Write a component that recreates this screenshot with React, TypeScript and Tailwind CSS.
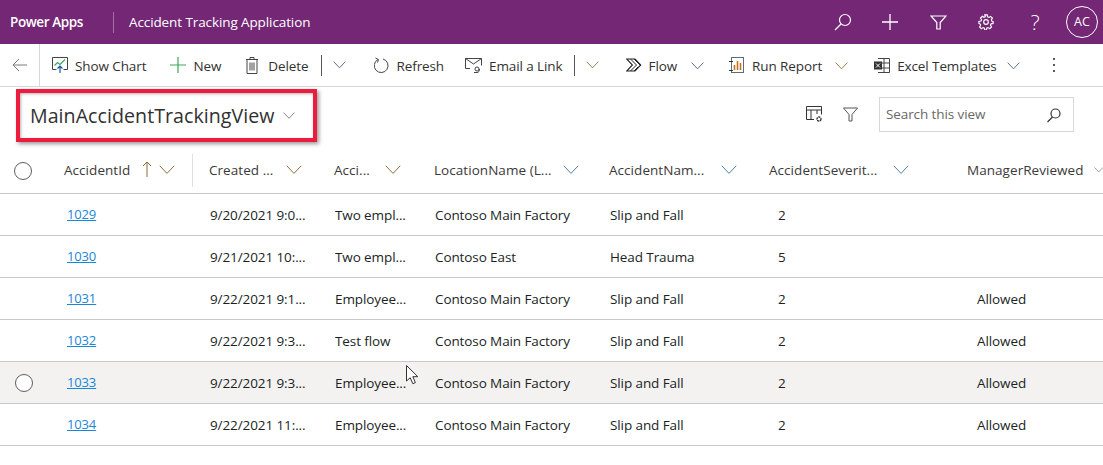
import React from "react";

const Chev = ({ c = "#605e5c", w = 12, className = "" }: { c?: string; w?: number; className?: string }) => (
  <svg width={w} height={w * 0.6} viewBox="0 0 20 12" fill="none" stroke={c} strokeWidth={20 / w} className={className}>
    <path d="M1 1l9 9.5L19 1" />
  </svg>
);

const Cmd = ({ icon, label, chev, chevColor, chevMl = "ml-[6px]", gap = "gap-[7px]", className = "" }: { icon: React.ReactNode; label: string; chev?: boolean; chevColor?: string; chevMl?: string; gap?: string; className?: string }) => (
  <div className={`flex items-center ${gap} ${className}`}>
    {icon}
    <span className="text-[#323130] whitespace-nowrap pt-[2px]">{label}</span>
    {chev && <Chev c={chevColor ?? "#5f6c8a"} w={13} className={`${chevMl} mt-[1px]`} />}
  </div>
);

const cols = "grid grid-cols-[64px_129px_125px_100px_175px_160px_198px_152px]";

const headers: { t: string; c: string; ml: string }[] = [
  { t: "Created ...", c: "#8a6d3b", ml: "ml-[13px]" },
  { t: "Acci...", c: "#8a6d3b", ml: "ml-[15px]" },
  { t: "LocationName (L...", c: "#4a7fa8", ml: "ml-[11px]" },
  { t: "AccidentNam...", c: "#4a7fa8", ml: "ml-[17px]" },
  { t: "AccidentSeverit...", c: "#4a7fa8", ml: "ml-[16px]" },
  { t: "ManagerReviewed", c: "#605e5c", ml: "ml-[10px]" },
];

const rows = [
  ["1029", "9/20/2021 9:0...", "Two empl...", "Contoso Main Factory", "Slip and Fall", "2", ""],
  ["1030", "9/21/2021 10:...", "Two empl...", "Contoso East", "Head Trauma", "5", ""],
  ["1031", "9/22/2021 9:1...", "Employee...", "Contoso Main Factory", "Slip and Fall", "2", "Allowed"],
  ["1032", "9/22/2021 9:3...", "Test flow", "Contoso Main Factory", "Slip and Fall", "2", "Allowed"],
  ["1033", "9/22/2021 9:3...", "Employee...", "Contoso Main Factory", "Slip and Fall", "2", "Allowed"],
  ["1034", "9/22/2021 11:...", "Employee...", "Contoso Main Factory", "Slip and Fall", "2", "Allowed"],
];

export default function App() {
  return (
    <div className="relative w-[1103px] h-[465px] overflow-hidden bg-white text-[13.5px] text-[#201f1e] font-['Open_Sans','Noto_Sans',sans-serif] tracking-[-0.1px]">
      {/* Top bar */}
      <div className="h-[44px] bg-[#742774] text-white flex items-center">
        <span className="ml-[10px] font-semibold text-[13.5px] tracking-[-0.4px]">Power Apps</span>
        <div className="ml-[30px] w-px h-[21px] bg-[#a06fa0]" />
        <span className="ml-[15px]">Accident Tracking Application</span>
        <div className="ml-auto flex items-center">
          <svg width="18" height="18" viewBox="0 0 18 18" fill="none" stroke="white" strokeWidth="1.2" className="mr-[30px]"><circle cx="11" cy="7" r="5.500" /><path d="M7 11L1 17" /></svg>
          <svg width="16" height="16" viewBox="0 0 16 16" fill="none" stroke="white" strokeWidth="1.300" className="mr-[32px]"><path d="M8 0v16M0 8h16" /></svg>
          <svg width="17" height="15" viewBox="0 0 17 15" fill="none" stroke="white" strokeWidth="1.200" className="mr-[31px]"><path d="M1 1h15L10.200 7.500V14H6.800V7.500z" /></svg>
          <svg width="16" height="16" viewBox="0 0 18 18" fill="none" stroke="white" strokeWidth="1.300" className="mr-[36px]"><circle cx="9" cy="9" r="2.600" /><path d="M7.600 1h2.800l.4 2.200 1.500.7 1.900-1.200 2 2-1.200 1.900.7 1.500L17 8.400v2.200l-2.300.5-.7 1.500 1.200 1.900-2 2-1.900-1.200-1.500.7-.4 2.200H7.600l-.4-2.200-1.500-.7-1.900 1.200-2-2 1.200-1.900-.7-1.500L1 10.600V8.400l2.300-.5.7-1.500-1.200-1.900 2-2 1.900 1.200 1.500-.7z" /></svg>
          <span className="w-[10px] mr-[26px] text-[21px] font-light leading-none text-center">?</span>
          <div className="mr-[5px] w-[32px] h-[32px] rounded-full border border-white flex items-center justify-center text-[12.5px] tracking-normal">AC</div>
        </div>
      </div>

      {/* Command bar */}
      <div className="h-[43px] border-b border-[#d8d8d8] flex items-center">
        <div className="w-[40px] h-full border-r border-[#d8d8d8] flex items-center justify-center">
          <svg width="16" height="14" viewBox="0 0 16 14" fill="none" stroke="#7a7a7a" strokeWidth="1"><path d="M15 7H1M7 1L1 7l6 6" /></svg>
        </div>
        <Cmd className="ml-[12px]" icon={<svg width="16" height="16" viewBox="0 0 16 16" fill="none"><path d="M4.500 12.500H.5v-12h15v12h-4" stroke="#444" /><path d="M2.500 8.500l3-3 2.500 2 5-5" stroke="#3fa75a" strokeWidth="1.200" /><path d="M8 16V9M5.500 11.500L8 9l2.500 2.500" stroke="#0a62a8" strokeWidth="1.200" /></svg>} label="Show Chart" />
        <Cmd className="ml-[24px]" icon={<svg width="16" height="16" viewBox="0 0 16 16" fill="none" stroke="#3fa75a" strokeWidth="1.200"><path d="M8 0v16M0 8h16" /></svg>} label="New" />
        <Cmd className="ml-[25px]" gap="gap-[10px]" icon={<svg width="12" height="17" viewBox="0 0 12 17" fill="none" stroke="#444"><path d="M0 2.500h12M4 2.500V.5h4v2M1 2.500v14h10v-14M4 5.500v8M6 5.500v8M8 5.500v8" /></svg>} label="Delete" />
        <div className="ml-[13px] w-px h-[21px] bg-[#555]" />
        <Chev c="#5f6c8a" w={13} className="ml-[11px]" />
        <Cmd className="ml-[28px]" icon={<svg width="15" height="18" viewBox="0 0 15 18" fill="none" stroke="#444"><path d="M4 3.500a6.900 6.900 0 1 0 5-.5" /><path d="M1.500 2l3 1.500-1 3" /></svg>} label="Refresh" />
        <Cmd className="ml-[21px]" icon={<svg width="17" height="15" viewBox="0 0 17 15" fill="none" stroke="#444"><path d="M5 10.500H.5V.5h16v7M.5.5L8.500 6l8-5.500" /><circle cx="12" cy="11" r="2" /><path d="M14.500 11a2.500 3 0 0 1-2.500 3.500h-3" /></svg>} label="Email a Link" />
        <div className="ml-[11px] w-px h-[21px] bg-[#555]" />
        <Chev c="#a8794a" w={13} className="ml-[11px]" />
        <Cmd className="ml-[27px]" icon={<svg width="16" height="14" viewBox="0 0 16 14" fill="none" stroke="#222"><path d="M.7 1h8.300l5.700 6-5.700 6H.7l5.700-6z" strokeWidth="1.100" /><path d="M4.500 1l6 6-6 6M8 1l7 7M8 13l4-4" strokeWidth="1" /></svg>} label="Flow" chev chevMl="ml-[7px]" />
        <Cmd className="ml-[25px]" gap="gap-[8px]" icon={<svg width="15" height="17" viewBox="0 0 15 17" fill="none"><rect x="2.500" y=".5" width="12" height="15" stroke="#5a6b80" /><path d="M5.500 13V8M8.500 13V4M11.500 13V6" stroke="#c5701f" strokeWidth="1.600" /><path d="M0 4.500h4M0 13.500h4" stroke="#333" /></svg>} label="Run Report" chev chevMl="ml-[5px]" chevColor="#a8794a" />
        <Cmd className="ml-[26px]" icon={<svg width="16" height="15" viewBox="0 0 16 15" fill="none"><path d="M4 .5h11.500v14H4M4 5h11.500M4 10h11.500M10 .5v14" stroke="#444" /><rect x="0" y="3.500" width="8" height="8" fill="#333" /><path d="M2 5.500l4 4M6 5.500l-4 4" stroke="white" /></svg>} label="Excel Templates" chev chevMl="ml-[3px]" />
        <svg width="4" height="16" viewBox="0 0 4 16" fill="#333" className="ml-[32px]"><circle cx="2" cy="2" r="1.100" /><circle cx="2" cy="8" r="1.100" /><circle cx="2" cy="14" r="1.100" /></svg>
      </div>

      {/* View row */}
      <div className="h-[63px] flex items-start">
        <div className="ml-[16px] mt-[2px] w-[301px] h-[53px] border-[4px] border-[#ee1c3c] shadow-[2px_2px_4px_rgba(0,0,0,0.4),inset_1px_1px_3px_rgba(0,0,0,0.3)] flex items-center pl-[10px] gap-[8px]">
          <span className="text-[19.6px] font-medium text-[#323130] tracking-[0.05px] whitespace-nowrap">MainAccidentTrackingView</span>
          <Chev c="#8a8886" w={12} className="mt-[1px]" />
        </div>
        <div className="ml-auto mt-[10px] mr-[29px] flex items-center">
          <svg width="17" height="17" viewBox="0 0 17 17" fill="none" stroke="#333" className="mr-[20px]"><path d="M8 13.500H.5V.5h15v8M.5 4h15M5 4v9.500M11 4v4" /><circle cx="13" cy="13" r="2" strokeDasharray="2 .6" strokeWidth="1.400" /></svg>
          <svg width="15" height="15" viewBox="0 0 15 15" fill="none" stroke="#555" className="mr-[21px]"><path d="M.5 1h14L9 7.500V14H6V7.500z" /></svg>
          <div className="w-[195px] h-[35px] border border-[#d8d8d8] flex items-center pl-[6px] pr-[11px] justify-between">
            <span className="text-[#6a6866]">Search this view</span>
            <svg width="16" height="16" viewBox="0 0 16 16" fill="none" stroke="#333" strokeWidth="1.200"><circle cx="9.500" cy="6.500" r="4.500" /><path d="M6.500 10L1.500 15" /></svg>
          </div>
        </div>
      </div>

      {/* Header */}
      <div className={`${cols} h-[44px] pb-[2px] border-b border-[#c8c8c8] items-center font-medium text-[#3b3a39] tracking-[0.05px]`}>
        <div className="pl-[14px]"><div className="w-[18px] h-[18px] rounded-full border border-[#605e5c]" /></div>
        <div className="h-[33px] flex items-center border-r border-[#e1dfdd]">
          <span>AccidentId</span>
          <svg width="10" height="16" viewBox="0 0 10 16" fill="none" stroke="#8a6d3b" className="ml-[12px] mb-[3px]"><path d="M5 16V1M1 5l4-4 4 4" /></svg>
          <Chev c="#8a6d3b" w={16} className="ml-[7px] mb-[1px]" />
        </div>
        {headers.map((h) => (
          <div key={h.t} className="flex items-center pl-[16px] whitespace-nowrap">
            <span>{h.t}</span>
            <Chev c={h.c} w={16} className={`${h.ml} mb-[1px]`} />
          </div>
        ))}
      </div>

      {/* Rows */}
      {rows.map((r) => (
        <div key={r[0]} className={`${cols} h-[42px] border-b border-[#c8c8c8] items-center ${r[0] === "1033" ? "bg-[#f3f2f1]" : ""}`}>
          <div className="pl-[15px]">
            {r[0] === "1033" && <div className="w-[18px] h-[18px] rounded-full border border-[#605e5c] bg-white" />}
          </div>
          <a className="pl-[3px] text-[13px] tracking-[-0.15px] text-[#1a86d8] underline">{r[0]}</a>
          <span className="pl-[17px] whitespace-nowrap pt-[2px]">{r[1]}</span>
          <span className="pl-[17px] whitespace-nowrap pt-[2px]">{r[2]}</span>
          <span className="pl-[17px] whitespace-nowrap pt-[2px]">{r[3]}</span>
          <span className="pl-[17px] whitespace-nowrap pt-[2px]">{r[4]}</span>
          <span className="pl-[25px] pt-[2px]">{r[5]}</span>
          <span className="pl-[26px] pt-[2px]">{r[6]}</span>
        </div>
      ))}

      {/* Mouse cursor */}
      <svg width="13" height="20" viewBox="0 0 13 20" fill="white" stroke="#333" className="absolute left-[406px] top-[365px]">
        <path d="M.5.5v15.500l3.700-3.300 2.600 6 2.600-1.100-2.600-5.900h5z" />
      </svg>
    </div>
  );
}
